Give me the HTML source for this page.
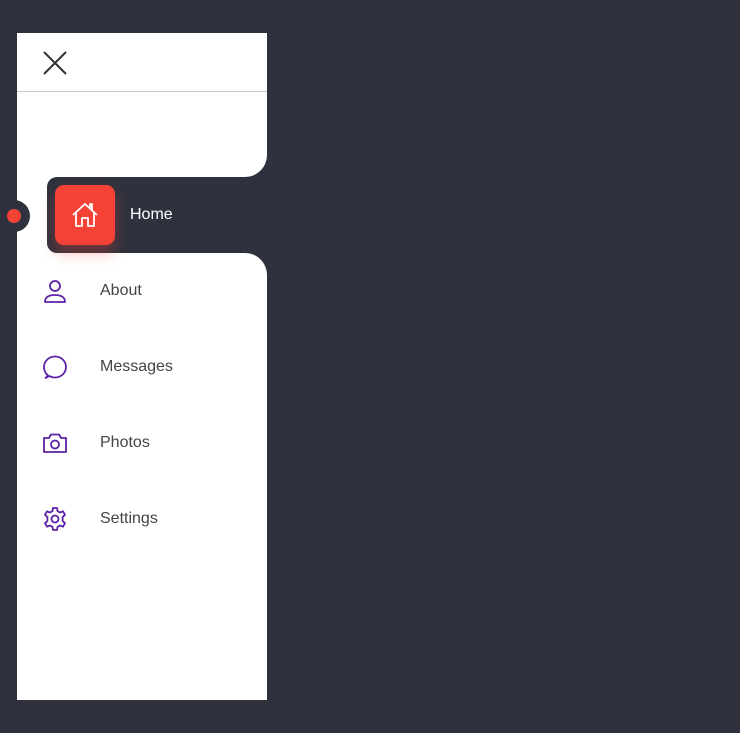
<!DOCTYPE html>
<html><head><style>
body{margin:0;width:740px;height:733px;background:#2f323e;position:relative;overflow:hidden;font-family:"Liberation Sans",sans-serif}
.a{position:absolute}
.lbl{position:absolute;left:100px;font-size:16px;color:#444}
svg.i{position:absolute;left:42px;width:26px;height:26px;fill:none;stroke:#5b21a6;stroke-width:1.8;stroke-linecap:round;stroke-linejoin:round}
</style></head><body>
<div class="a" style="left:17px;top:33px;width:250px;height:144px;background:#fff;border-bottom-right-radius:22px"></div>
<div class="a" style="left:17px;top:91px;width:250px;height:1px;background:#c8c8c8"></div>
<svg class="a" style="left:42px;top:50px" width="26" height="26" viewBox="0 0 26 26"><path d="M2 2L24 24M24 2L2 24" stroke="#333" stroke-width="2"/></svg>
<div class="a" style="left:17px;top:170px;width:50px;height:90px;background:#fff"></div>
<div class="a" style="left:17px;top:253px;width:250px;height:447px;background:#fff;border-top-right-radius:22px"></div>
<div class="a" style="left:47px;top:177px;width:220px;height:76px;background:#2f323e;border-radius:10px 0 0 10px"></div>
<div class="a" style="left:-2px;top:200px;width:32px;height:32px;border-radius:50%;background:#2f323e"></div>
<div class="a" style="left:7px;top:209px;width:14px;height:14px;border-radius:50%;background:#f44336"></div>
<div class="a" style="left:55px;top:185px;width:60px;height:60px;border-radius:9px;background:#f44336;box-shadow:0 8px 14px rgba(244,67,54,.35)"></div>
<svg class="a" style="left:70px;top:200px" width="30" height="30" viewBox="0 0 30 30" fill="none" stroke="#fff" stroke-width="1.8" stroke-linejoin="round"><path d="M3 15L15 4L27 15M6 12V26H12V18H18V26H24V12M20 8V4H22V10"/></svg>
<div class="a" style="left:130px;top:206px;font-size:16px;color:#fff">Home</div>
<svg class="i" style="top:278px" viewBox="0 0 26 26"><circle cx="13" cy="8" r="5"/><path d="M3 24C3 19 7 17 13 17S23 19 23 24Z"/></svg>
<div class="lbl" style="top:282px">About</div>
<svg class="i" style="top:354px" viewBox="0 0 26 26"><path d="M6 21.5C3.5 19.5 2 16.5 2 13C2 7 7 2.5 13 2.5S24 7 24 13 19 23.5 13 23.5C11 23.5 9 23 7.5 22L3.5 24Z"/></svg>
<div class="lbl" style="top:358px">Messages</div>
<svg class="i" style="top:430px" viewBox="0 0 26 26"><path d="M2 8H7L9 4.5H17L19 8H24V22H2Z"/><circle cx="13" cy="14.5" r="4"/></svg>
<div class="lbl" style="top:434px">Photos</div>
<svg class="i" style="top:506px" viewBox="0 0 26 26"><circle cx="13" cy="13" r="3.5"/><path d="M11 2H15L15.6 5.2L18 6.5L21 5.3L23 8.8L20.6 11V15L23 17.2L21 20.7L18 19.5L15.6 20.8L15 24H11L10.4 20.8L8 19.5L5 20.7L3 17.2L5.4 15V11L3 8.8L5 5.3L8 6.5L10.4 5.2Z"/></svg>
<div class="lbl" style="top:510px">Settings</div>
</body></html>
